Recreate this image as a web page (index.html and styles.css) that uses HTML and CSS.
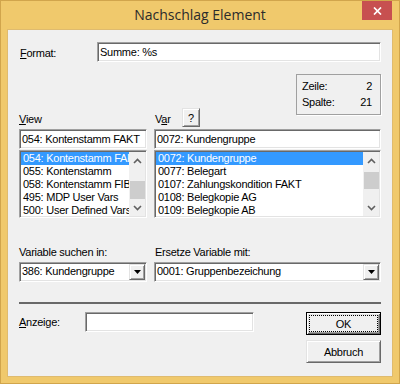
FILE: index.html
```html
<!DOCTYPE html>
<html lang="de">
<head>
    <meta charset="UTF-8">
    <title>Nachschlag Element</title>
    <link rel="stylesheet" href="styles.css">
</head>
<body>
    <div class="window">
        <div class="titlebar">
            <span class="title">Nachschlag Element</span>
            <div class="close-btn">
                <svg width="9" height="8" viewBox="0 0 9 8">
                    <path d="M1 0.5 L8 7.5 M8 0.5 L1 7.5" stroke="#fff" stroke-width="1.7" fill="none"/>
                </svg>
            </div>
        </div>

        <div class="client">
            <!-- Format -->
            <div class="format-row">
                <span class="format-label"><u>F</u>ormat:</span>
                <div class="edit format-edit">Summe: %s</div>
            </div>

            <div class="lookup">
                <div class="head-label"><u>V</u>iew</div>
                <div class="var-head">
                    <span class="var-label">V<u>a</u>r</span>
                    <div class="raised help-btn">?</div>
                    <div class="pos-box">
                        <div class="pos-row"><span>Zeile:</span><span>2</span></div>
                        <div class="pos-row"><span>Spalte:</span><span>21</span></div>
                    </div>
                </div>

                <div class="edit">054: Kontenstamm FAKT</div>
                <div class="edit">0072: Kundengruppe</div>

                <div class="listbox">
                    <div class="items">
                        <div class="item selected">054: Kontenstamm FAKT</div>
                        <div class="item">055: Kontenstamm</div>
                        <div class="item">058: Kontenstamm FIBU</div>
                        <div class="item">495: MDP User Vars</div>
                        <div class="item">500: User Defined Vars</div>
                    </div>
                    <div class="scrollbar">
                        <div class="sb-btn">
                            <svg width="9" height="6" viewBox="0 0 9 6"><polyline points="1,5 4.5,1.5 8,5" stroke="#606060" stroke-width="1.6" fill="none"/></svg>
                        </div>
                        <div class="sb-track"><div class="thumb thumb-view"></div></div>
                        <div class="sb-btn">
                            <svg width="9" height="6" viewBox="0 0 9 6"><polyline points="1,1 4.5,4.5 8,1" stroke="#606060" stroke-width="1.6" fill="none"/></svg>
                        </div>
                    </div>
                </div>
                <div class="listbox">
                    <div class="items">
                        <div class="item selected">0072: Kundengruppe</div>
                        <div class="item">0077: Belegart</div>
                        <div class="item">0107: Zahlungskondition FAKT</div>
                        <div class="item">0108: Belegkopie AG</div>
                        <div class="item">0109: Belegkopie AB</div>
                    </div>
                    <div class="scrollbar">
                        <div class="sb-btn">
                            <svg width="9" height="6" viewBox="0 0 9 6"><polyline points="1,5 4.5,1.5 8,5" stroke="#606060" stroke-width="1.6" fill="none"/></svg>
                        </div>
                        <div class="sb-track"><div class="thumb thumb-var"></div></div>
                        <div class="sb-btn">
                            <svg width="9" height="6" viewBox="0 0 9 6"><polyline points="1,1 4.5,4.5 8,1" stroke="#606060" stroke-width="1.6" fill="none"/></svg>
                        </div>
                    </div>
                </div>

                <div class="head-label">Variable suchen in:</div>
                <div class="head-label right-label">Ersetze Variable mit:</div>

                <div class="combo">
                    <div class="combo-text">386: Kundengruppe</div>
                    <div class="raised combo-btn">
                        <svg width="7" height="4" viewBox="0 0 7 4"><polygon points="0,0 7,0 3.5,4" fill="#000"/></svg>
                    </div>
                </div>
                <div class="combo">
                    <div class="combo-text">0001: Gruppenbezeichung</div>
                    <div class="raised combo-btn">
                        <svg width="7" height="4" viewBox="0 0 7 4"><polygon points="0,0 7,0 3.5,4" fill="#000"/></svg>
                    </div>
                </div>
            </div>

            <div class="separator"></div>

            <div class="bottom-row">
                <span class="anz-label"><u>A</u>nzeige:</span>
                <div class="edit anz-edit"></div>
                <div class="buttons">
                    <div class="raised button default"><div class="focus">OK</div></div>
                    <div class="raised button">Abbruch</div>
                </div>
            </div>
        </div>
    </div>
</body>
</html>
```

FILE: styles.css
```css
* {
    box-sizing: border-box;
}

body {
    margin: 0;
    font-family: "Liberation Sans", Arial, sans-serif;
    font-size: 11px;
    letter-spacing: -0.25px;
    color: #000;
}

.window {
    width: 400px;
    height: 384px;
    border: 1px solid #d1a54c;
    background-color: #f0c96c;
    display: flex;
    flex-direction: column;
    position: relative;
}

.titlebar {
    height: 28px;
    display: flex;
    justify-content: center;
    padding-top: 4px;
}

.title {
    font-family: "Open Sans", "Noto Sans", sans-serif;
    font-size: 14px;
    line-height: 19px;
    letter-spacing: 0;
    color: #2b2b2b;
}

.close-btn {
    position: absolute;
    top: 0;
    right: 7px;
    width: 30px;
    height: 19px;
    background-color: #c75050;
    display: flex;
    align-items: center;
    justify-content: center;
    padding-top: 1px;
}

.client {
    flex: 1;
    margin: 0 6px 6px;
    border: 1px solid #dfbb6f;
    background-color: #f0f0f0;
    padding: 12px 11px 0;
    display: flex;
    flex-direction: column;
}

/* sunken edit look */
.edit,
.listbox,
.combo {
    background-color: #fff;
    border: 1px solid;
    border-color: #a0a0a0 #fff #fff #a0a0a0;
    box-shadow: inset 1px 1px #696969, inset -1px -1px #e3e3e3;
}

.edit {
    height: 20px;
    padding: 3px 2px 0;
    line-height: 13px;
    white-space: nowrap;
    overflow: hidden;
}

/* raised button look */
.raised {
    background-color: #f0f0f0;
    border: 1px solid;
    border-color: #e3e3e3 #696969 #696969 #e3e3e3;
    box-shadow: inset 1px 1px #fff, inset -1px -1px #a0a0a0;
    display: flex;
    align-items: center;
    justify-content: center;
}

.format-row {
    display: flex;
    height: 20px;
}

.format-label {
    width: 78px;
    padding-left: 1px;
    line-height: 13px;
    margin-top: 5px;
}

.format-edit {
    flex: 1;
}

.lookup {
    margin-top: 12px;
    display: grid;
    grid-template-columns: 128px 227px;
    grid-template-rows: 55px 20px 69px 44px 20px;
    column-gap: 7px;
}

.head-label {
    align-self: end;
    line-height: 13px;
    margin-bottom: 3px;
    white-space: nowrap;
}

.lookup .head-label:nth-of-type(n) {
    margin-bottom: 3px;
}

.right-label {
    padding-left: 1px;
}

.var-head {
    display: flex;
    align-items: flex-end;
}

.var-label {
    width: 28px;
    padding-left: 1px;
    line-height: 13px;
    margin-bottom: 3px;
}

.help-btn {
    width: 18px;
    height: 19px;
    margin-bottom: 2px;
    font-size: 11px;
}

.pos-box {
    margin-left: auto;
    align-self: flex-start;
    width: 85px;
    height: 41px;
    border: 1px solid #a0a0a0;
    box-shadow: 1px 1px 0 #fff;
    padding: 3px 8px 0 5px;
}

.pos-row {
    display: flex;
    justify-content: space-between;
    line-height: 16px;
}

.listbox {
    align-self: end;
    height: 68px;
    padding: 1px;
    display: flex;
}

.items {
    flex: 1;
    min-width: 0;
    overflow: hidden;
}

.item {
    line-height: 13px;
    height: 13px;
    padding-left: 2px;
    white-space: nowrap;
}

.item.selected {
    background-color: #3399ff;
    color: #fff;
}

.scrollbar {
    width: 16px;
    display: flex;
    flex-direction: column;
    background-color: #f0f0f0;
}

.sb-btn {
    height: 17px;
    display: flex;
    align-items: center;
    justify-content: center;
}

.sb-track {
    flex: 1;
}

.thumb {
    width: 15px;
    margin-left: 1px;
    background-color: #cdcdcd;
}

.thumb-view {
    margin-top: 12px;
    height: 18px;
}

.thumb-var {
    margin-top: 3px;
    height: 17px;
}

.lookup > .head-label {
    margin-bottom: 6px;
}

.lookup > .head-label:first-child {
    margin-bottom: 3px;
}

.combo {
    height: 20px;
    padding: 1px;
    display: flex;
}

.combo-text {
    flex: 1;
    padding-left: 1px;
    line-height: 15px;
    white-space: nowrap;
    overflow: hidden;
}

.combo-btn {
    width: 16px;
    height: 16px;
}

.separator {
    margin-top: 20px;
    height: 2px;
    background-color: #696969;
}

.bottom-row {
    margin-top: 8px;
    display: flex;
    align-items: flex-start;
}

.anz-label {
    width: 66px;
    line-height: 13px;
    margin-top: 4px;
}

.anz-edit {
    width: 169px;
}

.buttons {
    margin-left: auto;
    display: flex;
    flex-direction: column;
    gap: 5px;
    width: 75px;
}

.button {
    height: 23px;
    padding-top: 1px;
}

.button.default {
    border: 1px solid #000;
    box-shadow: inset 1px 1px #fff, inset -1px -1px #696969, inset 2px 2px #e3e3e3, inset -2px -2px #a0a0a0;
    padding: 2px;
    align-items: stretch;
}

.focus {
    flex: 1;
    border: 1px dotted #000;
    display: flex;
    align-items: center;
    justify-content: center;
}
```
